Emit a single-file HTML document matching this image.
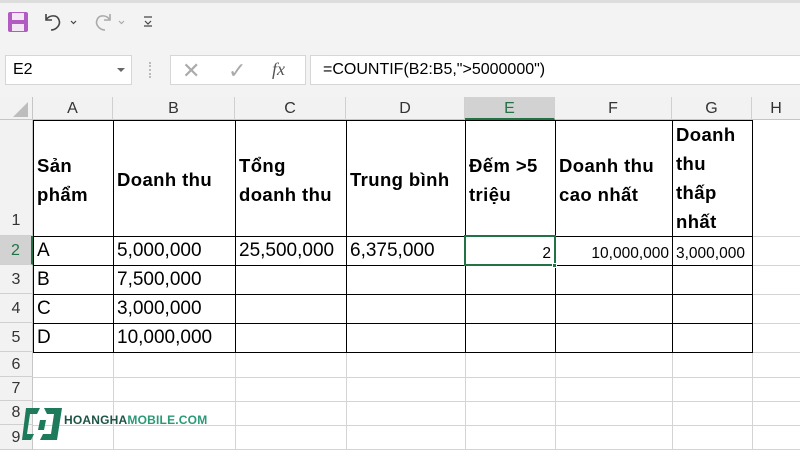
<!DOCTYPE html>
<html><head><meta charset="utf-8"><style>
*{margin:0;padding:0;box-sizing:border-box}
body{width:800px;height:450px;overflow:hidden;background:#fff;font-family:"Liberation Sans",sans-serif;position:relative}
.a{position:absolute}
.ch{position:absolute;top:97px;height:23px;background:#f2f2f2;border-right:1px solid #d0d0d0;border-bottom:1px solid #c6c6c6;text-align:center;font-size:16px;line-height:23px;color:#333}
.rh{position:absolute;left:0;width:33px;background:#f2f2f2;border-bottom:1px solid #d0d0d0;border-right:1px solid #c6c6c6;font-size:16px;color:#333;text-align:center}
.vl{position:absolute;width:1px;background:#d4d4d4;top:120px;height:330px}
.hl{position:absolute;height:1px;background:#d4d4d4;left:33px;width:767px}
.c{position:absolute;font-size:19px;color:#000;white-space:nowrap;padding-left:4px}
.b{font-weight:bold;font-size:18.5px;line-height:29px;letter-spacing:0.4px}
</style></head><body>
<div class="a" style="left:0;top:0;width:800px;height:43px;background:#f3f3f3;border-top:3px solid #ddd"></div>
<svg class="a" style="left:7px;top:11px" width="22" height="22" viewBox="0 0 22 22"><rect x="1" y="1" width="20" height="20" rx="2" fill="#b05cc0"/><rect x="5" y="2" width="12" height="7" fill="#f3e6f5"/><rect x="5" y="13" width="12" height="7" fill="#f3e6f5"/></svg>
<svg class="a" style="left:42px;top:11px" width="40" height="22" viewBox="0 0 40 22"><path d="M4 3v6h6M4 9c3-5 11-6 13 0c2 5-3 10-8 10" fill="none" stroke="#444" stroke-width="1.6"/><path d="M29 10l2.5 2.5 2.5-2.5" fill="none" stroke="#444" stroke-width="1.2"/></svg>
<svg class="a" style="left:90px;top:11px" width="40" height="22" viewBox="0 0 40 22"><path d="M20 3v6h-6M20 9c-3-5-11-6-13 0c-2 5 3 10 8 10" fill="none" stroke="#aaa" stroke-width="1.6"/><path d="M29 10l2.5 2.5 2.5-2.5" fill="none" stroke="#aaa" stroke-width="1.2"/></svg>
<svg class="a" style="left:142px;top:15px" width="12" height="14" viewBox="0 0 12 14"><path d="M2 2h8M3 6l3 3 3-3M2 11h8" fill="none" stroke="#444" stroke-width="1.2"/></svg>
<div class="a" style="left:0;top:43px;width:800px;height:54px;background:#f3f3f3"></div>
<div class="a" style="left:5px;top:55px;width:127px;height:30px;background:#fff;border:1px solid #d6d6d6;font-size:16px;line-height:28px;padding-left:7px">E2</div>
<div class="a" style="left:117px;top:68px;border:4px solid transparent;border-top:4px solid #666"></div>
<div class="a" style="left:149px;top:62px;width:2px;height:16px;border-left:2px dotted #bbb"></div>
<div class="a" style="left:170px;top:55px;width:136px;height:30px;background:#fff;border:1px solid #d6d6d6"></div>
<div class="a" style="left:182px;top:58px;font-size:22px;color:#aaa">✕</div>
<div class="a" style="left:228px;top:58px;font-size:22px;color:#aaa">✓</div>
<div class="a" style="left:272px;top:59px;font-size:18px;color:#555;font-style:italic;font-family:'Liberation Serif',serif">fx</div>
<div class="a" style="left:310px;top:55px;width:495px;height:30px;background:#fff;border:1px solid #d6d6d6;font-size:16px;line-height:28px;padding-left:12px">=COUNTIF(B2:B5,"&gt;5000000")</div>
<div class="a" style="left:0;top:97px;width:33px;height:23px;background:#f2f2f2;border-right:1px solid #c6c6c6;border-bottom:1px solid #c6c6c6"></div>
<div class="a" style="left:13px;top:102px;border-left:15px solid transparent;border-bottom:15px solid #bdbdbd"></div>
<div class="ch" style="left:33px;width:80px">A</div>
<div class="ch" style="left:113px;width:122px">B</div>
<div class="ch" style="left:235px;width:111px">C</div>
<div class="ch" style="left:346px;width:119px">D</div>
<div class="ch" style="left:465px;width:90px;background:#d2d2d2;border-bottom:2px solid #217346;color:#217346">E</div>
<div class="ch" style="left:555px;width:117px">F</div>
<div class="ch" style="left:672px;width:80px">G</div>
<div class="ch" style="left:752px;width:48px;border-right:none">H</div>
<div class="rh" style="top:120px;height:116px;line-height:26px;padding-top:88px">1</div>
<div class="rh" style="top:236px;height:29px;line-height:29px;background:#d2d2d2;border-right:2px solid #217346;color:#217346">2</div>
<div class="rh" style="top:265px;height:29px;line-height:29px">3</div>
<div class="rh" style="top:294px;height:29px;line-height:29px">4</div>
<div class="rh" style="top:323px;height:29px;line-height:29px">5</div>
<div class="rh" style="top:352px;height:25px;line-height:25px">6</div>
<div class="rh" style="top:377px;height:24px;line-height:24px">7</div>
<div class="rh" style="top:401px;height:24px;line-height:24px">8</div>
<div class="rh" style="top:425px;height:25px;line-height:25px">9</div>
<div class="vl" style="left:113px"></div><div class="vl" style="left:235px"></div><div class="vl" style="left:346px"></div><div class="vl" style="left:465px"></div><div class="vl" style="left:555px"></div><div class="vl" style="left:672px"></div><div class="vl" style="left:752px"></div>
<div class="hl" style="top:236px"></div><div class="hl" style="top:265px"></div><div class="hl" style="top:294px"></div><div class="hl" style="top:323px"></div><div class="hl" style="top:352px"></div><div class="hl" style="top:377px"></div><div class="hl" style="top:401px"></div><div class="hl" style="top:425px"></div><div class="hl" style="top:449px"></div>
<svg class="a" style="left:33px;top:120px" width="720" height="234">
<g stroke="#000" stroke-width="1.2" fill="none" shape-rendering="crispEdges">
<path d="M0.5 0v233M80.5 0v233M202.5 0v233M313.5 0v233M432.5 0v233M522.5 0v233M639.5 0v233M719.5 0v233"/>
<path d="M0 0.5h720M0 116.5h720M0 145.5h720M0 174.5h720M0 203.5h720M0 232.5h720"/>
</g></svg>
<div class="c b" style="left:33px;top:151px">Sản<br>phẩm</div>
<div class="c b" style="left:113px;top:165px">Doanh thu</div>
<div class="c b" style="left:235px;top:151px">Tổng<br>doanh thu</div>
<div class="c b" style="left:346px;top:165px">Trung bình</div>
<div class="c b" style="left:465px;top:151px">Đếm &gt;5<br>triệu</div>
<div class="c b" style="left:555px;top:151px">Doanh thu<br>cao nhất</div>
<div class="c b" style="left:672px;top:120px">Doanh<br>thu<br>thấp<br>nhất</div>
<div class="c" style="left:33px;top:240px">A</div>
<div class="c" style="left:113px;top:240px">5,000,000</div>
<div class="c" style="left:235px;top:240px">25,500,000</div>
<div class="c" style="left:346px;top:240px">6,375,000</div>
<div class="c" style="left:33px;top:269px">B</div><div class="c" style="left:113px;top:269px">7,500,000</div>
<div class="c" style="left:33px;top:298px">C</div><div class="c" style="left:113px;top:298px">3,000,000</div>
<div class="c" style="left:33px;top:327px">D</div><div class="c" style="left:113px;top:327px">10,000,000</div>
<div class="a" style="left:464px;top:235px;width:92px;height:31px;border:2px solid #217346"></div>
<div class="a" style="left:552px;top:263px;width:5px;height:5px;background:#217346;border:1px solid #fff"></div>
<div class="a" style="left:465px;top:245px;width:86px;text-align:right;font-size:15.5px">2</div>
<div class="a" style="left:555px;top:245px;width:114px;text-align:right;font-size:15.5px">10,000,000</div>
<div class="a" style="left:676px;top:245px;font-size:15.5px">3,000,000</div>
<svg class="a" style="left:20px;top:404px" width="44" height="40" viewBox="0 0 44 40"><path d="M6 4h14l-3 6h-7l-3 20h7l-3 6H2z" fill="#1d7a5a"/><path d="M24 4h18l-5 32H20l3-6h8l3-20h-7z" fill="#1d7a5a"/><path d="M20 16h6l-2 10h-6z" fill="#1d7a5a"/></svg>
<div class="a" style="left:64px;top:413px;font-size:12px;font-weight:bold;letter-spacing:0.2px"><span style="color:#1d5446">HOANGHA</span><span style="color:#2a9a76">MOBILE.COM</span></div>
</body></html>
